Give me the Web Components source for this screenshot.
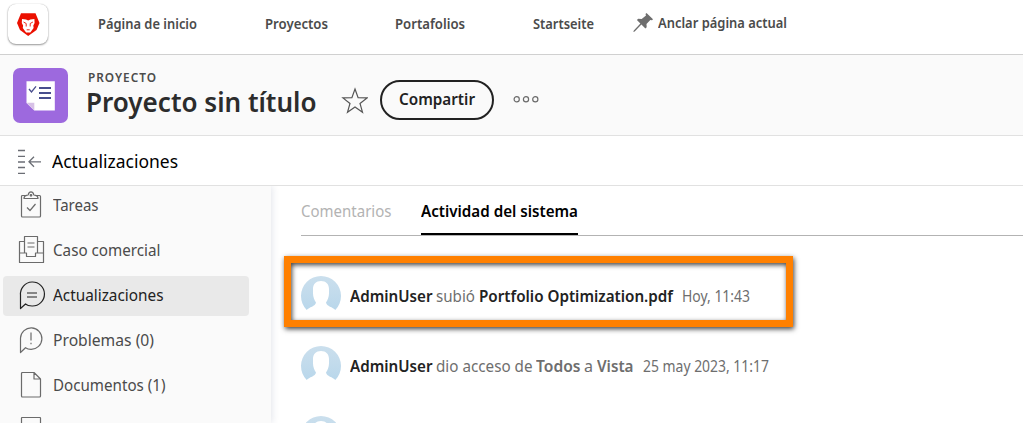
<!DOCTYPE html>
<html lang="es">
<head>
<meta charset="utf-8">
<title>Proyecto sin título</title>
<style>
html,body{margin:0;height:423px;overflow:hidden;background:#fff}
body{font-family:"Noto Sans","Open Sans",sans-serif;color:#222}
</style>
</head>
<body>
<project-page></project-page>
<script>
const define=(name,html,after)=>customElements.define(name,class extends HTMLElement{
  constructor(){super();this.attachShadow({mode:'open'});}
  connectedCallback(){this.shadowRoot.innerHTML=html;if(after)after(this);}
});

/* Text condensed to a set advance width. */
define('fit-text',`<style>:host{display:block;flex:none;white-space:nowrap;line-height:24px}
span{display:inline-block;transform-origin:0 50%}</style><span><slot></slot></span>`,el=>{
  const w=+el.getAttribute('w'),s=el.shadowRoot.querySelector('span');
  el.style.width=w+'px';
  s.style.transform='scaleX('+(w/s.getBoundingClientRect().width)+')';
});

const icons={
tasks:`<path d="M7.500 5.500h-4a1 1 0 0 0-1 1V26a1 1 0 0 0 1 1h17a1 1 0 0 0 1-1V6.500a1 1 0 0 0-1-1h-4"/><path d="M5 8.500h14q0-2.800-2.500-3.200l-1.700-.3C14.500 2.800 13.500 1.800 12 1.800S9.500 2.800 9.200 5L7.500 5.300Q5 5.700 5 8.500z"/><circle cx="12" cy="5.300" r=".8" fill="currentColor"/><path d="M8 17.500l3 3 5.500-6.500"/>`,
case:`<path d="M5.500 18V1.500h13V18"/><path d="M5.500 6.500H.5v21h24v-21h-6"/><path d="M.5 18H7.500v3.500h9V18h8M8.500 8h7M8.500 12h7"/>`,
updates:`<path d="M1.500 28.500V15A12 12 0 1 1 13 26c-3 0-5-.6-6.500-2z"/><path d="M8 13h10M8 17h10"/>`,
problem:`<path d="M1.500 27.500V13A10.700 10.700 0 1 1 12 24.300c-2.500 0-4.300-.8-5.500-1.600z"/><path d="M12 7.500v8M12 17.800v1.500"/>`,
doc:`<path d="M3 2.500h12l6.500 6.500v17a1 1 0 0 1-1 1h-17a1 1 0 0 1-1-1v-22.500a1 1 0 0 1 1-1zM15 2.500V9h6.500"/>`,
page:`<path d="M3 2.500h18a.5.500 0 0 1 .5.500v24h-19v-24a.5.500 0 0 1 .5-.5z"/>`
};
define('nav-icon',`<style>:host{display:block;flex:none;width:28px;height:30px}svg{display:block;overflow:visible;fill:none;stroke:currentColor;stroke-width:1.200;stroke-linejoin:round}</style><svg width="28" height="30" viewBox="0 0 28 30"></svg>`,
 el=>{el.shadowRoot.querySelector('svg').innerHTML=icons[el.getAttribute('name')]});

define('side-item',`<style>:host{display:flex;box-sizing:border-box;height:40px;width:246px;margin:0 0 5px 3px;padding:0 0 2px 16px;align-items:center;border-radius:4px;color:#4b4b4b;font-size:16px}
:host([selected]){background:#e9e9e9;color:#222}
nav-icon{color:#6b6b6b;margin-right:6px}:host([selected]) nav-icon{color:#222}</style><nav-icon></nav-icon><slot></slot>`,
 el=>el.shadowRoot.querySelector('nav-icon').replaceWith(Object.assign(document.createElement('template'),{innerHTML:`<nav-icon name="${el.getAttribute('icon')}"></nav-icon>`}).content));

define('side-bar',`<style>:host{display:block;flex:none;width:271px;background:#fafafa;box-shadow:1px 0 7px rgba(30,45,90,.13)}</style>
<side-item icon="tasks"><fit-text w="45.500">Tareas</fit-text></side-item>
<side-item icon="case"><fit-text w="107.500">Caso comercial</fit-text></side-item>
<side-item icon="updates" selected><fit-text w="110.500">Actualizaciones</fit-text></side-item>
<side-item icon="problem"><fit-text w="101">Problemas (0)</fit-text></side-item>
<side-item icon="doc"><fit-text w="112.500">Documentos (1)</fit-text></side-item>
<side-item icon="page"></side-item>`);

define('top-nav',`<style>:host{display:flex;height:54px;border-bottom:1px solid #d0d0d0;background:#fff;align-items:flex-start;font-size:14px;font-weight:600;color:#4b4b4b}
.logo{width:40px;height:40px;margin:4px 50px 0 8px;border-radius:8px;background:#fff;box-shadow:0 1px 2px rgba(0,0,0,.4),0 0 1px rgba(0,0,0,.25);flex:none}
.logo svg{display:block}
fit-text{margin-top:12px}.pin{margin:11px 4px 0 39px;flex:none}</style>
<div class="logo"><svg width="40" height="40" viewBox="0 0 40 40"><path fill="#eb1000" d="M13 9.300h14.500l4 9.700-3 7-8.300 6-8.200-6-3-7z"/><path fill="#fff" d="M14 15l4 .5 2.200 1 2.200-1 4-.5.200 4-1.300 2.500.3 2.500-1.800 2.500-1.500 2h-4.200l-1.500-2-1.800-2.500.3-2.500-1.300-2.500z"/><path fill="none" stroke="#eb1000" stroke-width=".9" d="M15.500 18l2.700 1.500v3M24.900 18l-2.700 1.500v3M18.700 25.800h3"/></svg></div>
<fit-text w="99">Página de inicio</fit-text>
<fit-text w="63" style="margin-left:68px">Proyectos</fit-text>
<fit-text w="70" style="margin-left:67px">Portafolios</fit-text>
<fit-text w="61" style="margin-left:68px">Startseite</fit-text>
<svg class="pin" width="21" height="23" viewBox="0 0 21 23"><path fill="#6e6e6e" d="M13.500 2l6.500 6.200-1 1.100-1.700-.4-3.800 4 .2 3.300-1.300 1.200-4-3.900-6.700 7-1.400.5.500-1.500 6.600-6.900-3.500-3.700 1.300-1.100 3.500.3L13 4.500 12.500 3z"/></svg>
<fit-text w="129" style="margin-top:11px">Anclar página actual</fit-text>`);

define('project-header',`<style>:host{display:flex;height:80px;border-bottom:1px solid #e1e1e1;background:#fafafa;align-items:flex-start}
.badge{margin:13px 18px 0 13px;flex:none}.names{width:231px;flex:none}
.kind{font-size:12px;font-weight:600;letter-spacing:1px;color:#4b4b4b;line-height:16px;height:16px;margin:15px 0 0 2px}
.title{font-size:27px;font-weight:600;line-height:32px;color:#2c2c2c;margin:0}
.star{margin:32px 0 0 24px;flex:none}
button{all:unset;box-sizing:border-box;display:flex;justify-content:center;width:114px;height:40px;border:2px solid #222;border-radius:20px;margin:25px 0 0 12px;padding-top:5px;font-size:16px;font-weight:600;color:#222}
.dots{margin:38px 0 0 18px}</style>
<svg class="badge" width="55" height="55" viewBox="0 0 55 55"><rect width="55" height="55" rx="7" fill="#9d69de"/><path fill="#fff" d="M13.500 13.300h28.300v29.200H21.300l-7.800-7.500z"/><path fill="#d7c1e6" d="M13.500 34.800h7.800v7.700z"/><path d="M26 20h12M26 25h12M26 30h12" stroke="#484e8d" stroke-width="2.200"/><path d="M16 21l2.500 3 4.500-5.700" fill="none" stroke="#484e8d" stroke-width="1.300"/></svg>
<div class="names"><fit-text class="kind" w="69">PROYECTO</fit-text><fit-text class="title" w="230.500">Proyecto sin título</fit-text></div>
<svg class="star" width="27" height="28" viewBox="0 0 27 28"><path d="M14 2l3.100 8.600 9 .3-7.100 5.600 2.500 8.700L14 20.100l-7.500 5.100L9 16.500l-7.100-5.600 9-.3z" fill="none" stroke="#555" stroke-width="1.200"/></svg>
<button><fit-text w="76">Compartir</fit-text></button>
<svg class="dots" width="30" height="12" viewBox="0 0 30 12" fill="none" stroke="#6b6b6b" stroke-width="1.200"><circle cx="4.700" cy="6.300" r="2.600"/><circle cx="14" cy="6.300" r="2.600"/><circle cx="23.300" cy="6.300" r="2.600"/></svg>`);

define('section-bar',`<style>:host{display:flex;height:49px;border-bottom:1px solid #e1e1e1;background:#fff;color:#000;font-size:18px;position:relative;z-index:1}
svg{margin:12px 10px 0 17px;flex:none}fit-text{margin-top:13px}</style>
<svg width="25" height="28" viewBox="0 0 25 28" fill="none" stroke="#6b6e75" stroke-width="1.300"><path d="M1 2.500h7M1 8.300h7M1 14h7M1 19.500h7M1 25.300h7M12 13.800h12M17 8.800l-5 5 5 5"/></svg><fit-text w="126">Actualizaciones</fit-text>`);

define('user-avatar',`<style>:host{display:block;flex:none;width:40px;height:40px}svg{display:block}</style>
<svg width="40" height="40" viewBox="0 0 40 40"><defs><linearGradient id="g" x2="0" y2="1"><stop stop-color="#cbdfed"/><stop offset="1" stop-color="#b9d7eb"/></linearGradient></defs><path fill="url(#g)" d="M5.700 34A20 20 0 1 1 34.300 34C32 31 25.500 30.500 25 26.500c1.500-2 3-5.500 3-9V13c0-5-3-8-8-8s-8 3-8 8v4.500c0 3.500 1.500 7 3 9-.5 4-7 4.500-9.300 7.500z"/></svg>`);

define('activity-row',`<style>:host{display:flex;height:40px;margin-bottom:30px;font-size:16px;color:#6e6e6e}
user-avatar{margin-right:9px}::slotted(fit-text){margin:8px 3.500px 0 0}::slotted(.who){color:#222;font-weight:600}::slotted(.obj){font-weight:600}::slotted(.date){margin-left:6px}</style><user-avatar></user-avatar><slot></slot>`);

define('activity-panel',`<style>:host{display:block;flex:1;position:relative;padding-left:30px;min-width:0}
.tabs{display:flex;height:49px;border-bottom:1px solid #b3b3b3;font-size:16px;color:#b3b3b3;gap:29.500px;margin-bottom:40px}
fit-text.tab{padding-top:13px;height:36px}.tab.on{box-sizing:border-box;height:49px;border-bottom:2px solid #000;color:#000;font-weight:600}
.mark{position:absolute;left:13px;top:70px;width:495px;height:57px;border:7px solid #ff8000;box-shadow:1px 2px 5px rgba(0,0,0,.75),inset 1px 2px 5px rgba(0,0,0,.75)}</style>
<div class="tabs"><fit-text class="tab" w="90.500">Comentarios</fit-text><fit-text class="tab on" w="157">Actividad del sistema</fit-text></div>
<activity-row><fit-text class="who" w="82.500">AdminUser</fit-text><fit-text w="39">subió</fit-text><fit-text class="who" w="194">Portfolio Optimization.pdf</fit-text><fit-text class="date" w="68">Hoy, 11:43</fit-text></activity-row>
<activity-row><fit-text class="who" w="82.500">AdminUser</fit-text><fit-text w="96.500">dio acceso de</fit-text><fit-text class="obj" w="44.500">Todos</fit-text><fit-text w="9">a</fit-text><fit-text class="obj" w="36.500">Vista</fit-text><fit-text class="date" w="126">25 may 2023, 11:17</fit-text></activity-row>
<activity-row></activity-row>
<div class="mark"></div>`);

define('project-page',`<style>:host{display:flex;flex-direction:column;width:1023px;height:423px;overflow:hidden}
main{display:flex;flex:1;min-height:0;overflow:hidden}top-nav,project-header,section-bar{flex:none}</style>
<top-nav></top-nav><project-header></project-header><section-bar></section-bar><main><side-bar></side-bar><activity-panel></activity-panel></main>`);
</script>
</body>
</html>
